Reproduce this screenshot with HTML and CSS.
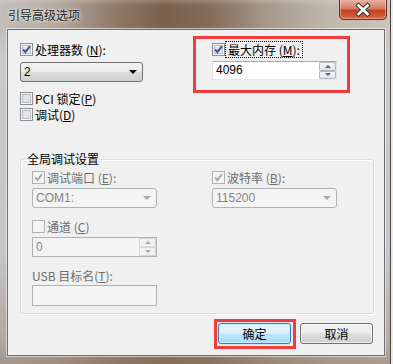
FILE: index.html
```html
<!DOCTYPE html>
<html lang="zh-CN">
<head>
<meta charset="utf-8">
<title>引导高级选项</title>
<link rel="stylesheet" href="styles.css">
</head>
<body>
<div class="window">
  <div class="titlebar">
    <span class="title">引导高级选项</span>
    <div class="close">
      <svg width="48" height="20" viewBox="0 0 48 20">
        <defs>
          <linearGradient id="cg" x1="0" y1="0" x2="0" y2="1">
            <stop offset="0" stop-color="#e9b3a5"/>
            <stop offset="0.45" stop-color="#d77a62"/>
            <stop offset="0.52" stop-color="#c2401f"/>
            <stop offset="1" stop-color="#da6a45"/>
          </linearGradient>
        </defs>
        <path d="M0.5 0 V15 Q0.5 19.5 5 19.5 H43 Q47.5 19.5 47.5 15 V0" fill="url(#cg)" stroke="#5b3328"/>
        <path d="M1.5 0 V14.5 Q1.5 18.5 5.5 18.5 H42.5 Q46.5 18.5 46.5 14.5 V0" fill="none" stroke="rgba(255,220,210,0.45)"/>
        <path d="M19.5 5.5 L28.5 14 M28.5 5.5 L19.5 14" stroke="#3b3b3b" stroke-width="4.6" stroke-linecap="square"/>
        <path d="M19.5 5.5 L28.5 14 M28.5 5.5 L19.5 14" stroke="#ffffff" stroke-width="2.6" stroke-linecap="square"/>
      </svg>
    </div>
  </div>

  <div class="client">
    <div class="top">
      <div class="col">
        <div class="chk">
          <svg class="cb" viewBox="0 0 13 13"><rect x="0.5" y="0.5" width="12" height="12" fill="#f6f6f6" stroke="#8e8f8f"/><rect x="2.5" y="2.5" width="8" height="8" fill="#e2e4e8" stroke="#b9bdc4"/><path d="M3.2 6.4 L5.4 9.2 L10 3.2" stroke="#3a5697" stroke-width="1.9" fill="none"/></svg>
          <span>处理器数 (<u>N</u>):</span>
        </div>
        <div class="combo"><span class="val">2</span><i class="arrow"></i></div>
        <div class="chk chk-pci">
          <svg class="cb" viewBox="0 0 13 13"><rect x="0.5" y="0.5" width="12" height="12" fill="#f6f6f6" stroke="#8e8f8f"/><rect x="2.5" y="2.5" width="8" height="8" fill="#e2e4e8" stroke="#b9bdc4"/></svg>
          <span>PCI 锁定(<u>P</u>)</span>
        </div>
        <div class="chk chk-dbg">
          <svg class="cb" viewBox="0 0 13 13"><rect x="0.5" y="0.5" width="12" height="12" fill="#f6f6f6" stroke="#8e8f8f"/><rect x="2.5" y="2.5" width="8" height="8" fill="#e2e4e8" stroke="#b9bdc4"/></svg>
          <span>调试(<u>D</u>)</span>
        </div>
      </div>
      <div class="col">
        <div class="chk">
          <svg class="cb" viewBox="0 0 13 13"><rect x="0.5" y="0.5" width="12" height="12" fill="#f6f6f6" stroke="#8e8f8f"/><rect x="2.5" y="2.5" width="8" height="8" fill="#e2e4e8" stroke="#b9bdc4"/><path d="M3.2 6.4 L5.4 9.2 L10 3.2" stroke="#3a5697" stroke-width="1.9" fill="none"/></svg>
          <span class="focus">最大内存 (<u>M</u>):</span>
        </div>
        <div class="spin spin-mem">
          <span class="val">4096</span>
          <div class="spinbtns"><b class="up"></b><b class="down"></b></div>
        </div>
      </div>
    </div>

    <fieldset class="group">
      <legend>全局调试设置</legend>
      <div class="gcols">
        <div class="col">
          <div class="chk dis">
            <svg class="cb" viewBox="0 0 13 13"><rect x="0.5" y="0.5" width="12" height="12" fill="#f4f4f4" stroke="#b1b1b1"/><path d="M3.2 6.4 L5.4 9.2 L10 3.2" stroke="#a7a7a7" stroke-width="1.9" fill="none"/></svg>
            <span>调试端口 (<u>E</u>):</span>
          </div>
          <div class="combo dis"><span class="val">COM1:</span><i class="arrow"></i></div>
          <div class="chk dis chk-ch">
            <svg class="cb" viewBox="0 0 13 13"><rect x="0.5" y="0.5" width="12" height="12" fill="#f4f4f4" stroke="#b1b1b1"/></svg>
            <span>通道 (<u>C</u>)</span>
          </div>
          <div class="spin dis spin-ch">
            <span class="val">0</span>
            <div class="spinbtns"><b class="up"></b><b class="down"></b></div>
          </div>
          <div class="lbl dis">USB 目标名(<u>T</u>):</div>
          <div class="edit dis"></div>
        </div>
        <div class="col">
          <div class="chk dis">
            <svg class="cb" viewBox="0 0 13 13"><rect x="0.5" y="0.5" width="12" height="12" fill="#f4f4f4" stroke="#b1b1b1"/><path d="M3.2 6.4 L5.4 9.2 L10 3.2" stroke="#a7a7a7" stroke-width="1.9" fill="none"/></svg>
            <span>波特率 (<u>B</u>):</span>
          </div>
          <div class="combo dis"><span class="val">115200</span><i class="arrow"></i></div>
        </div>
      </div>
    </fieldset>

    <div class="buttons">
      <button class="btn default">确定</button>
      <button class="btn">取消</button>
    </div>

    <div class="mark mark-mem"></div>
    <div class="mark mark-ok"></div>
  </div>
</div>
</body>
</html>
```

FILE: styles.css
```css
* { box-sizing: border-box; }
html, body { margin: 0; padding: 0; }
body {
  width: 393px;
  height: 364px;
  overflow: hidden;
  background: #e9ebee;
  font-family: "Noto Sans CJK SC", "Noto Sans", sans-serif;
  font-size: 12px;
  color: #000;
}

.window {
  width: 391px;
  height: 364px;
  border-right: 1px solid #4a4038;
  background:
    linear-gradient(180deg, rgba(255,255,255,0.18) 0, rgba(255,255,255,0) 6px, rgba(0,0,0,0) 26px, rgba(205,205,210,0.75) 55px, rgba(198,200,206,0.8) 250px, rgba(160,148,136,0.5) 340px, rgba(140,120,104,0.55) 364px),
    linear-gradient(90deg, #c2bdb8 0%, #b4a99f 14%, #8f7866 30%, #7a604b 42%, #846c59 54%, #a5978a 68%, #c0b7ad 84%, #cbc4bc 100%);
}

.titlebar {
  height: 29px;
  display: flex;
  justify-content: space-between;
  align-items: flex-start;
  padding: 0 3px 0 8px;
}
.title {
  margin-top: 6px;
  line-height: 17px;
  font-size: 12px;
  color: #1c1c1c;
  text-shadow: 0 0 5px rgba(255,255,255,0.9), 0 0 2px rgba(255,255,255,0.8);
}
.close { width: 48px; height: 20px; }
.close svg { display: block; }

.client {
  position: relative;
  margin-left: 7px;
  width: 378px;
  height: 327px;
  border: 1px solid #6c6f74;
  box-shadow: 0 0 0 1px rgba(255,255,255,0.55);
  background: #f0f0f0;
  padding: 13px 11px 0 12px;
}

.top {
  display: grid;
  grid-template-columns: 192px 1fr;
}
.col { display: flex; flex-direction: column; align-items: flex-start; }

.chk {
  display: flex;
  align-items: center;
  gap: 2px;
  height: 13px;
  line-height: 13px;
  white-space: nowrap;
}
.cb { width: 13px; height: 13px; flex: none; display: block; }
.chk span { line-height: 13px; }
.focus {
  padding: 0 1px;
  outline: 1px dotted #000;
  outline-offset: 1px;
}
.chk-pci { margin-top: 10px; }
.chk-dbg { margin-top: 3px; }

.val {
  font-family: "Liberation Sans", "DejaVu Sans", sans-serif;
  font-size: 12px;
  line-height: 18px;
}

.combo {
  margin-top: 6px;
  width: 123px;
  height: 20px;
  border: 1px solid #707070;
  border-radius: 3px;
  background: linear-gradient(180deg, #f2f2f2 0%, #ebebeb 48%, #dddddd 52%, #cfcfcf 100%);
  display: flex;
  align-items: center;
  justify-content: space-between;
  padding: 0 4px 0 3px;
}
.arrow {
  width: 0; height: 0;
  border-left: 4px solid transparent;
  border-right: 4px solid transparent;
  border-top: 4px solid #000;
  margin-right: 1px;
}

.spin {
  width: 125px;
  height: 19px;
  display: flex;
  justify-content: space-between;
  border: 1px solid #e2e3ea;
  border-top-color: #abadb3;
  border-bottom-color: #e3e9ef;
  background: #fff;
  padding-left: 3px;
}
.spin-mem { margin-top: 5px; }
.spin .val { line-height: 17px; }
.spinbtns {
  width: 17px;
  display: flex;
  flex-direction: column;
  gap: 0;
}
.spinbtns b {
  flex: 1;
  display: flex;
  align-items: center;
  justify-content: center;
  border: 1px solid #b3b8c1;
  background: linear-gradient(180deg, #f5f6f8, #dfe3e9);
  border-radius: 1px;
}
.spinbtns b::before {
  content: "";
  width: 0; height: 0;
  border-left: 3px solid transparent;
  border-right: 3px solid transparent;
}
.spinbtns .up::before { border-bottom: 3px solid #4d6185; }
.spinbtns .down::before { border-top: 3px solid #4d6185; }

.group {
  margin: 31px 0 0 0;
  width: 354px;
  padding: 0;
  border: 1px solid #d5dfe5;
  border-radius: 3px;
  box-shadow: inset 1px 1px 0 #fff, 1px 1px 0 #fff;
  min-width: 0;
}
.group legend {
  margin-left: 4px;
  padding: 0 2px;
  line-height: 14px;
  font-size: 12px;
}
.gcols {
  display: grid;
  grid-template-columns: 180px 1fr;
  padding: 5px 0 7px 11px;
}

.dis { color: #6d6d6d; }
.combo.dis {
  margin-top: 4px;
  width: 125px;
  border-color: #adb2b5;
  background: #f4f4f4;
}
.combo.dis .val { color: #838383; }
.combo.dis .arrow { border-top-color: #a8a8a8; }
.chk-ch { margin-top: 12px; }
.spin.dis {
  margin-top: 4px;
  height: 20px;
  border: 1px solid #adb2b5;
  background: #f4f4f4;
}
.spin.dis .val { color: #838383; line-height: 18px; }
.spin.dis .spinbtns b { border-color: #d4d6d9; background: #f1f1f1; }
.spin.dis .up::before { border-bottom-color: #a8a8a8; }
.spin.dis .down::before { border-top-color: #a8a8a8; }

.lbl { margin-top: 12px; height: 13px; line-height: 13px; white-space: nowrap; }
.edit {
  margin-top: 3px;
  width: 125px;
  height: 21px;
  border: 1px solid #adb2b5;
  background: #f4f4f4;
}

.buttons {
  display: flex;
  justify-content: flex-end;
  gap: 9px;
  margin-top: 9px;
}
.btn {
  width: 73px;
  height: 21px;
  padding: 0;
  font-family: "Noto Sans CJK SC", sans-serif;
  font-size: 12px;
  line-height: 17px;
  color: #000;
  border: 1px solid #707070;
  border-radius: 3px;
  background: linear-gradient(180deg, #f2f2f2 0%, #ebebeb 48%, #dddddd 52%, #cfcfcf 100%);
  box-shadow: inset 0 0 0 1px rgba(255,255,255,0.7);
}
.btn.default {
  border-color: #3c7fb1;
  background: linear-gradient(180deg, #eaf6fd 0%, #d9f0fc 48%, #bee6fd 52%, #a7d9f5 100%);
  box-shadow: inset 0 0 0 1px #c6ecfd, 0 0 2px #7fc8f0;
}

.mark {
  position: absolute;
  border: 3px solid #f23b3b;
}
.mark-mem { left: 185px; top: 6px; width: 157px; height: 57px; }
.mark-ok { left: 206px; top: 289px; width: 82px; height: 30px; }
```
